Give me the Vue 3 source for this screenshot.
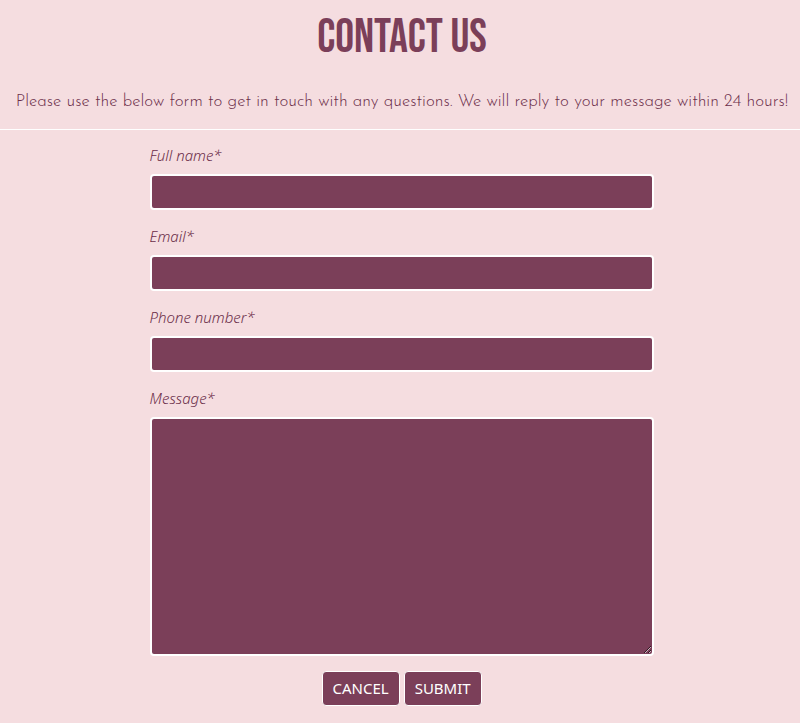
<script setup>
import { ref } from 'vue'

const fields = [
  { id: 'full-name', label: 'Full name*', type: 'text', autocomplete: 'name' },
  { id: 'email', label: 'Email*', type: 'email', autocomplete: 'email' },
  { id: 'phone', label: 'Phone number*', type: 'tel', autocomplete: 'tel' },
]

const values = ref({ 'full-name': '', email: '', phone: '' })
const message = ref('')
</script>

<template>
  <main class="page">
    <header class="intro">
      <h1 class="title">CONTACT US</h1>
      <p class="lead">Please use the below form to get in touch with any questions. We will reply to your message within 24 hours!</p>
    </header>
    <form class="form" @submit.prevent>
      <div v-for="field in fields" :key="field.id" class="field">
        <label class="label" :for="field.id">{{ field.label }}</label>
        <input
          :id="field.id"
          v-model="values[field.id]"
          class="control"
          :type="field.type"
          :autocomplete="field.autocomplete"
          required
        />
      </div>
      <div class="field">
        <label class="label" for="message">Message*</label>
        <textarea id="message" v-model="message" class="control message" rows="9" required></textarea>
      </div>
      <div class="actions">
        <button class="button" type="reset">CANCEL</button>
        <button class="button" type="submit">SUBMIT</button>
      </div>
    </form>
  </main>
</template>

<style>
body {
  margin: 0;
  background: #f5dde0;
}
</style>

<style scoped>
.page {
  color: #7b3f59;
  font-family: "Noto Sans", "Open Sans", sans-serif;
}

.intro {
  padding: 14px 0 15px 4px;
  border-bottom: 1px solid #fff;
  text-align: center;
}

.title {
  margin: 0 0 28px;
  font-family: "Bebas Neue", "Liberation Sans Narrow", "Open Sans", sans-serif;
  font-size: 47px;
  font-weight: 400;
  line-height: 48px;
}

.lead {
  margin: 0;
  color: #6b2d49;
  font-family: "Josefin Sans", Lato, sans-serif;
  font-size: 17px;
  font-weight: 300;
  line-height: 24px;
}

.form {
  box-sizing: border-box;
  width: 63%;
  margin-left: 18.7%;
  padding: 14px 0;
}

.field {
  display: flex;
  flex-direction: column;
  gap: 7px;
  margin-bottom: 15px;
}

.label {
  color: #6b2d49;
  font-size: 15px;
  font-style: italic;
  font-weight: 300;
  line-height: 23px;
}

.control {
  box-sizing: border-box;
  width: 100%;
  height: 36px;
  padding: 4px 8px;
  border: 2px solid #fff;
  border-radius: 4px;
  background: #7b3f59;
  color: #fff;
  font: inherit;
}

.message {
  height: 239px;
  resize: both;
}

.actions {
  display: flex;
  justify-content: center;
  gap: 4px;
}

.button {
  padding: 5px 10px;
  border: 1px solid #fff;
  border-radius: 4px;
  background: #7b3f59;
  color: #fff;
  font-family: inherit;
  font-size: 15px;
  line-height: 23px;
}
</style>
